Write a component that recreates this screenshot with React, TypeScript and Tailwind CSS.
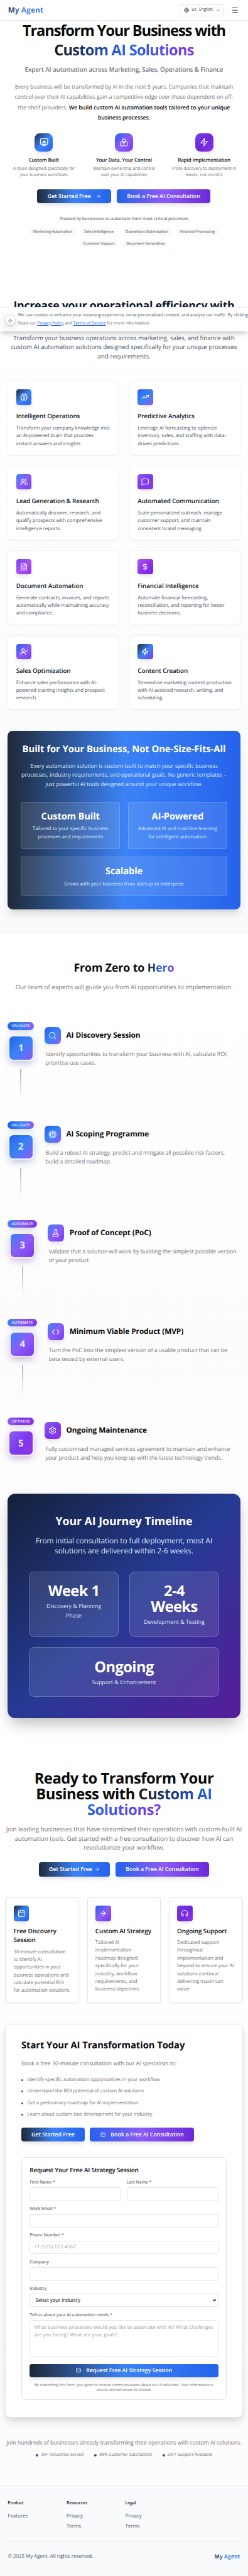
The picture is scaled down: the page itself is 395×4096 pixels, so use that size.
import { Fragment, type ReactNode } from "react";
import {
  ArrowRight, Brain, Calendar, ChevronDown, Code, DollarSign, FileText, FlaskConical, Globe, Headphones,
  Mail, Menu, MessageSquare, Search, Settings, Target, TrendingUp, UserCheck, Users, Zap,
} from "lucide-react";

function Lines({ of }: { of: string[] }) {
  return (
    <>
      {of.map((line, i) => (
        <Fragment key={i}>
          {i > 0 && <br />}
          {line}
        </Fragment>
      ))}
    </>
  );
}

const darkBlue = "bg-linear-to-r/srgb from-[#1f2937] via-[#3b82f6] to-[#2563eb]";
const bluePurple = "bg-linear-to-r/srgb from-[#2563eb] via-[#8b5cf6] to-[#6d28d9]";
const headline = "bg-linear-to-r/srgb from-[#171717] via-[#2563eb] to-[#7c3aed] bg-clip-text text-transparent";
const softShadow = "shadow-[0_10px_15px_-3px_rgb(0_0_0/0.1),0_4px_6px_-4px_rgb(0_0_0/0.1)]";

function MonitorIcon() {
  return (
    <svg viewBox="0 0 24 24" className="size-7" fill="none" stroke="white" strokeWidth="1.8" strokeLinejoin="round" strokeLinecap="round">
      <rect x="2.5" y="2.5" width="19" height="15" rx="2" />
      <path d="M2.5 13.7h19M9.8 17.5v3.3M14.2 17.5v3.3M8 21.3h8" />
      <path d="M8.2 11.5a3.8 3.8 0 1 1 7.6 0v1.6H8.2z" fill="white" stroke="none" />
    </svg>
  );
}

function LockIcon() {
  return (
    <svg viewBox="0 0 24 24" className="size-7" fill="none" stroke="white" strokeWidth="1.8" strokeLinejoin="round" strokeLinecap="round">
      <rect x="3" y="10.8" width="18" height="10.8" rx="2" />
      <path d="M7.6 10.8V7.2a4.4 4.4 0 0 1 8.8 0v3.6M12 14v3.2" />
      <path d="M9.3 11.5h5.4L12 15z" fill="white" />
    </svg>
  );
}

function BoltIcon() {
  return (
    <svg viewBox="0 0 24 24" className="size-7" fill="none" stroke="white" strokeWidth="1.8" strokeLinejoin="round" strokeLinecap="round">
      <path d="M13 2 3 14h9l-1 8 10-12h-9z" />
      <path d="M10 9h4v6h-4z" fill="white" fillOpacity="0.5" stroke="none" />
    </svg>
  );
}

function Header() {
  return (
    <header className="flex h-[65px] items-center justify-between border-b border-[#ebebee] bg-white pr-7 pl-[25px] shadow-[0_1px_2px_rgb(0_0_0/0.06)]">
      <div className={`${darkBlue} bg-clip-text text-[23px] leading-8 font-bold tracking-[0.008em] text-transparent`}>My Agent</div>
      <div className="flex items-center gap-[21px]">
        <div className="flex h-[37px] w-[139px] items-center rounded-md border border-[#e5e5e5] pl-3 text-[13.4px] text-[#374151]">
          <Globe className="size-4" />
          <span className="ml-2">us</span>
          <span className="ml-2 tracking-[-0.017em]">English</span>
          <ChevronDown className="ml-2 size-4" />
        </div>
        <Menu className="size-6 text-[#374151]" />
      </div>
    </header>
  );
}

function HeroFeature({ tile, icon, title, lines }: { tile: string; icon: ReactNode; title: string; lines: string[] }) {
  return (
    <div className="flex w-60 flex-col items-center">
      <div className={`flex size-14 items-center justify-center rounded-2xl ${softShadow} ${tile}`}>{icon}</div>
      <h3 className="mt-4 text-[15.4px] leading-6 font-semibold tracking-[-0.01em] text-[#0a0a0a]">{title}</h3>
      <p className="mt-1 text-[13.4px] leading-5 tracking-[-0.014em] text-[#737373]"><Lines of={lines} /></p>
    </div>
  );
}

function Hero() {
  const pills = [
    ["Marketing Automation", "Sales Intelligence", "Operations Optimization", "Financial Processing"],
    ["Customer Support", "Document Generation"],
  ];
  return (
    <section className="flex h-[764px] flex-col items-center bg-white text-center">
      <h1 className="text-[46.1px] leading-[60px] font-bold tracking-[-0.049em] text-[#0a0a0a]">
        Transform Your Business with<br />
        <span className={`${headline} inline-block tracking-[-0.033em]`}>Custom AI Solutions</span>
      </h1>
      <p className="mt-[15px] text-[19.2px] leading-7 font-semibold tracking-[-0.012em] text-[#737373]">
        Expert AI automation across Marketing, Sales, Operations &amp; Finance
      </p>
      <p className="mt-6 text-[17.3px] leading-8 tracking-[-0.009em] text-[#737373]">
        Every business will be transformed by AI in the next 5 years. Companies that maintain<br />
        control over their AI capabilities gain a competitive edge over those dependent on off-<br />
        the-shelf providers. <span className="font-semibold tracking-[-0.007em] text-[#0a0a0a]">We build custom AI automation tools tailored to your unique<br />
        business processes.</span>
      </p>
      <div className="mt-8 flex gap-2">
        <HeroFeature tile="bg-linear-to-br/srgb from-[#1f2937] via-[#3b82f6] to-[#2563eb]" icon={<MonitorIcon />} title="Custom Built" lines={["AI tools designed specifically for", "your business workflows"]} />
        <HeroFeature tile="bg-linear-to-br/srgb from-[#2563eb] via-[#8b5cf6] to-[#7c3aed]" icon={<LockIcon />} title="Your Data, Your Control" lines={["Maintain ownership and control", "over your AI capabilities"]} />
        <HeroFeature tile="bg-linear-to-br/srgb from-[#7c3aed] via-[#6d28d9] to-[#9333ea]" icon={<BoltIcon />} title="Rapid Implementation" lines={["From discovery to deployment in", "weeks, not months"]} />
      </div>
      <div className="mt-8 flex gap-4">
        <CtaButton tone={darkBlue} className="h-11 w-[229px] gap-4" label="Get Started Free" after={<ArrowRight className="size-4" />} />
        <CtaButton tone={bluePurple} className="h-11 w-[291px]" label="Book a Free AI Consultation" />
      </div>
      <p className="mt-10 text-[13.4px] leading-5 font-semibold tracking-[-0.014em] text-[#737373]">
        Trusted by businesses to automate their most critical processes
      </p>
      <div className="mt-4 flex flex-col items-center gap-3">
        {pills.map((row, i) => (
          <div key={i} className="flex gap-3">
            {row.map((pill) => (
              <span key={pill} className="rounded-full bg-[#fafafa] px-3 text-[11.5px] leading-6 font-semibold tracking-[-0.017em] text-[#737373]">{pill}</span>
            ))}
          </div>
        ))}
      </div>
    </section>
  );
}

function CtaButton({ tone, className, label, before, after }: { tone: string; className: string; label: string; before?: ReactNode; after?: ReactNode }) {
  return (
    <button className={`flex items-center justify-center rounded-lg text-[17.3px] leading-7 font-semibold tracking-[-0.009em] text-white ${softShadow} ${tone} ${className}`}>
      {before}
      <span>{label}</span>
      {after}
    </button>
  );
}

const features = [
  { icon: Brain, tile: "bg-linear-to-br/srgb from-[#1f2937] via-[#3b82f6] to-[#2563eb]", title: "Intelligent Operations", lines: ["Transform your company knowledge into", "an AI-powered brain that provides", "instant answers and insights."] },
  { icon: TrendingUp, tile: "bg-linear-to-br/srgb from-[#2563eb] via-[#3b82f6] to-[#8b5cf6]", title: "Predictive Analytics", lines: ["Leverage AI forecasting to optimize", "inventory, sales, and staffing with data-", "driven predictions."] },
  { icon: Users, tile: "bg-linear-to-br/srgb from-[#3b82f6] via-[#8b5cf6] to-[#7c3aed]", title: "Lead Generation & Research", lines: ["Automatically discover, research, and", "qualify prospects with comprehensive", "intelligence reports."] },
  { icon: MessageSquare, tile: "bg-linear-to-br/srgb from-[#8b5cf6] via-[#7c3aed] to-[#9333ea]", title: "Automated Communication", lines: ["Scale personalized outreach, manage", "customer support, and maintain", "consistent brand messaging."] },
  { icon: FileText, tile: "bg-linear-to-br/srgb from-[#7c3aed] via-[#a855f7] to-[#9333ea]", title: "Document Automation", lines: ["Generate contracts, invoices, and reports", "automatically while maintaining accuracy", "and compliance."] },
  { icon: DollarSign, tile: "bg-linear-to-br/srgb from-[#a855f7] via-[#9333ea] to-[#6d28d9]", title: "Financial Intelligence", lines: ["Automate financial forecasting,", "reconciliation, and reporting for better", "business decisions."] },
  { icon: UserCheck, tile: "bg-linear-to-br/srgb from-[#2563eb] via-[#8b5cf6] to-[#7c3aed]", title: "Sales Optimization", lines: ["Enhance sales performance with AI-", "powered training insights and prospect", "research."] },
  { icon: Zap, tile: "bg-linear-to-br/srgb from-[#1f2937] via-[#3b82f6] to-[#7c3aed]", title: "Content Creation", lines: ["Streamline marketing content production", "with AI-assisted research, writing, and", "scheduling."] },
];

function BuiltCard({ title, lines, className }: { title: string; lines: string[]; className: string }) {
  return (
    <div className={`rounded-lg border border-white/20 bg-white/10 pt-[25px] ${className}`}>
      <div className="text-[28.8px] leading-9 font-bold tracking-[-0.014em]">{title}</div>
      <p className="mt-2.5 text-[15.4px] leading-6 tracking-[-0.005em] text-[#dbeafe]"><Lines of={lines} /></p>
    </div>
  );
}

function FeatureSection() {
  return (
    <section className="relative h-[2058px] bg-linear-to-b/srgb from-white to-[#f9fafb] px-6 pt-24 text-center">
      <h2 className="h-20 text-[34.6px] leading-10 font-bold tracking-[-0.017em] text-[#0f172a]">Increase your operational efficiency with</h2>
      <p className="mt-6 text-[19.2px] leading-7 tracking-[-0.007em] text-[#4b5563]">
        <Lines of={["Transform your business operations across marketing, sales, and finance with", "custom AI automation solutions designed specifically for your unique processes", "and requirements."]} />
      </p>
      <div className="mt-[63px] grid grid-cols-2 gap-x-[33px] gap-y-8 text-left">
        {features.map(({ icon: Icon, tile, title, lines }) => (
          <article key={title} className="h-[230px] rounded-xl border border-[#f3f4f6] bg-white p-6 shadow-[0_1px_2px_rgb(0_0_0/0.05)]">
            <div className={`flex size-12 items-center justify-center rounded-lg text-white ${softShadow} ${tile}`}><Icon className="size-6" /></div>
            <h3 className="mt-[21px] text-[19.2px] leading-7 font-semibold tracking-[-0.013em] text-[#111827]">{title}</h3>
            <p className="mt-3 text-[15.4px] leading-6 tracking-[-0.01em] text-[#4b5563]"><Lines of={lines} /></p>
          </article>
        ))}
      </div>
      <div className={`mt-16 h-[552px] rounded-2xl px-10 pt-10 text-white shadow-[0_20px_25px_-5px_rgb(0_0_0/0.1),0_8px_10px_-6px_rgb(0_0_0/0.1)] ${darkBlue}`}>
        <h3 className="text-[28.8px] leading-9 font-bold tracking-[-0.004em]">Built for Your Business, Not One-Size-Fits-All</h3>
        <p className="mt-5 text-[17.3px] leading-7 tracking-[-0.009em] text-[#dbeafe]">
          <Lines of={["Every automation solution is custom-built to match your specific business", "processes, industry requirements, and operational goals. No generic templates –", "just powerful AI tools designed around your unique workflow."]} />
        </p>
        <div className="mt-10 grid grid-cols-2 gap-6">
          <BuiltCard className="h-[146px]" title="Custom Built" lines={["Tailored to your specific business", "processes and requirements"]} />
          <BuiltCard className="h-[146px]" title="AI-Powered" lines={["Advanced AI and machine learning", "for intelligent automation"]} />
          <BuiltCard className="col-span-2 h-[121px]" title="Scalable" lines={["Grows with your business from startup to enterprise"]} />
        </div>
      </div>
      <CookieBanner />
    </section>
  );
}

function CookieBanner() {
  return (
    <aside className="absolute top-[118px] left-0 flex h-[77px] w-full overflow-visible border-t border-[#e5e7eb] bg-white text-left shadow-[0_10px_15px_-3px_rgb(0_0_0/0.18),0_4px_6px_-4px_rgb(0_0_0/0.15)]">
      <div className="relative flex w-14 shrink-0 items-center bg-radial-[circle_at_32px_45px] from-[#ececec] to-white to-75% pt-2 pl-[17px]">
        <svg viewBox="0 0 12 8" className="absolute top-[29px] left-8 h-2 w-3" fill="none" stroke="#2563eb" strokeWidth="1.6"><path d="M0 1.5c4 0 7 1 9.500 4" /></svg>
        <div className="relative flex size-[29px] items-center justify-center rounded-full bg-white shadow-[0_2px_6px_rgb(0_0_0/0.25)]">
          <Zap className="size-4 text-[#6b6b6b]" strokeWidth={1.8} />
        </div>
      </div>
      <div className="overflow-hidden pt-[15px] text-[13.4px] leading-6 tracking-[-0.009em]">
        <p className="text-[#4b5563]">We use cookies to enhance your browsing experience, serve personalized content, and analyze our traffic. By clicking</p>
        <p className="text-[#6b7280]">
          Read our <a className="text-[#2563eb] underline">Privacy Policy</a> and <a className="text-[#2563eb] underline">Terms of Service</a> for more information.
        </p>
      </div>
    </aside>
  );
}

const validate = {
  badge: "bg-linear-to-r/srgb from-[#2563eb] via-[#3b82f6] to-[#8b5cf6]",
  tile: "bg-linear-to-br/srgb from-[#2563eb] via-[#3b82f6] to-[#8b5cf6]",
  glow: "shadow-[0_0_0_4px_#eff3fe,0_12px_20px_0_rgb(60_50_130/0.22),0_0_30px_6px_rgb(59_130_246/0.14)]",
};
const automate = {
  badge: "bg-linear-to-r/srgb from-[#3b82f6] via-[#8b5cf6] to-[#7c3aed]",
  tile: "bg-linear-to-br/srgb from-[#3b82f6] via-[#8b5cf6] to-[#7c3aed]",
  glow: "shadow-[0_0_0_4px_#f3effd,0_12px_20px_0_rgb(80_40_120/0.22),0_0_30px_6px_rgb(139_92_246/0.14)]",
};
const optimise = {
  badge: "bg-linear-to-r/srgb from-[#8b5cf6] via-[#7c3aed] to-[#9333ea]",
  tile: "bg-linear-to-br/srgb from-[#8b5cf6] via-[#7c3aed] to-[#9333ea]",
  glow: "shadow-[0_0_0_4px_#f3effd,0_12px_20px_0_rgb(80_40_120/0.22),0_0_30px_6px_rgb(139_92_246/0.14)]",
};

const steps = [
  { phase: "VALIDATE", tone: validate, icon: Search, width: "w-[81px]", title: "AI Discovery Session", lines: ["Identify opportunities to transform your business with AI, calculate ROI,", "prioritise use cases."] },
  { phase: "VALIDATE", tone: validate, icon: Target, width: "w-[81px]", title: "AI Scoping Programme", lines: ["Build a robust AI strategy, predict and mitigate all possible risk factors,", "build a detailed roadmap."] },
  { phase: "AUTOMATE", tone: automate, icon: FlaskConical, width: "w-[91px]", title: "Proof of Concept (PoC)", lines: ["Validate that a solution will work by building the simplest possible version", "of your product."] },
  { phase: "AUTOMATE", tone: automate, icon: Code, width: "w-[91px]", title: "Minimum Viable Product (MVP)", lines: ["Turn the PoC into the simplest version of a usable product that can be", "beta tested by external users."] },
  { phase: "OPTIMISE", tone: optimise, icon: Settings, width: "w-[81px]", title: "Ongoing Maintenance", lines: ["Fully customised managed services agreement to maintain and enhance", "your product and help you keep up with the latest technology trends."] },
];

function TimelineCard({ title, lines, className }: { title: string[]; lines: string[]; className: string }) {
  return (
    <div className={`rounded-2xl border border-white/20 bg-white/10 pt-[34px] ${className}`}>
      <div className="text-[46.1px] leading-[48px] font-bold tracking-[-0.026em]"><Lines of={title} /></div>
      <p className="mt-2.5 text-[17.3px] leading-7 text-[#dbeafe]"><Lines of={lines} /></p>
    </div>
  );
}

function ProcessSection() {
  return (
    <section className="h-[2485px] bg-linear-to-b/srgb from-white via-[#fcfcfc] to-white px-6 pt-[82px]">
      <h2 className="text-center text-[34.6px] leading-10 font-bold tracking-[-0.007em] text-[#0a0a0a]">
        From Zero to <span className={headline}>Hero</span>
      </h2>
      <p className="mt-6 text-center text-[19.2px] leading-7 tracking-[-0.006em] text-[#737373]">
        Our team of experts will guide you from AI opportunities to implementation.
      </p>
      <div className="mt-[96px] h-[1455px]">
        {steps.map(({ phase, tone, icon: Icon, width, title, lines }, i) => (
          <div key={title} className="flex h-[305px] items-start gap-9">
            <div className={`flex shrink-0 flex-col items-center ${width}`}>
              <div className={`h-6 w-full rounded-full text-center text-[11.5px] leading-6 font-semibold tracking-[0.04em] text-white/90 ${softShadow} ${tone.badge}`}>{phase}</div>
              <div className={`mt-5 flex size-[72px] items-center justify-center rounded-xl text-[28.8px] leading-9 font-bold text-white/85 ${tone.tile} ${tone.glow}`}>{i + 1}</div>
              {i < 4 && <div className="mt-7 h-24 w-1 rounded-full bg-linear-to-b/srgb from-[#b3b3b8] via-[#ddd0fa] to-transparent" />}
            </div>
            <div className="pt-[15px]">
              <div className="-ml-1 flex items-center gap-4">
                <div className={`flex size-[52px] items-center justify-center rounded-xl text-white/90 ${softShadow} ${tone.tile}`}><Icon className="size-[26px]" /></div>
                <h3 className="text-[23px] leading-8 font-bold tracking-[-0.007em] text-[#0a0a0a]">{title}</h3>
              </div>
              <p className="mt-[17px] text-[17.3px] leading-7 tracking-[-0.008em] text-[#737373]"><Lines of={lines} /></p>
            </div>
          </div>
        ))}
      </div>
      <div className="h-[694px] rounded-3xl bg-linear-to-br/srgb from-[#13203a] via-[#253a93] to-[#581c9c] px-[65px] pt-[66px] text-center text-white shadow-[0_25px_50px_-12px_rgb(0_0_0/0.28),0_0_24px_rgb(0_0_0/0.04)]">
        <h3 className="text-[34.6px] leading-10 font-bold tracking-[-0.004em]">Your AI Journey Timeline</h3>
        <p className="mt-6 text-[23px] leading-8 tracking-[-0.006em] text-[#dbeafe]">
          <Lines of={["From initial consultation to full deployment, most AI", "solutions are delivered within 2-6 weeks."]} />
        </p>
        <div className="mt-[47px] grid grid-cols-2 gap-8">
          <TimelineCard className="h-[202px]" title={["Week 1"]} lines={["Discovery & Planning", "Phase"]} />
          <TimelineCard className="h-[202px]" title={["2-4", "Weeks"]} lines={["Development & Testing"]} />
          <TimelineCard className="col-span-2 h-[154px]" title={["Ongoing"]} lines={["Support & Enhancement"]} />
        </div>
      </div>
    </section>
  );
}

const offers = [
  { icon: Calendar, tile: "bg-linear-to-br/srgb from-[#1f2937] via-[#3b82f6] to-[#2563eb]", title: ["Free Discovery", "Session"], lines: ["30-minute consultation", "to identify AI", "opportunities in your", "business operations and", "calculate potential ROI", "for automation solutions."] },
  { icon: ArrowRight, tile: "bg-linear-to-br/srgb from-[#2563eb] via-[#8b5cf6] to-[#7c3aed]", title: ["Custom AI Strategy"], lines: ["Tailored AI", "implementation", "roadmap designed", "specifically for your", "industry, workflow", "requirements, and", "business objectives."] },
  { icon: Headphones, tile: "bg-linear-to-br/srgb from-[#7c3aed] via-[#6d28d9] to-[#9333ea]", title: ["Ongoing Support"], lines: ["Dedicated support", "throughout", "implementation and", "beyond to ensure your AI", "solutions continue", "delivering maximum", "value."] },
];

function Field({ label, placeholder = "" }: { label: string; placeholder?: string }) {
  return (
    <label className="block">
      <FieldLabel>{label}</FieldLabel>
      <span className="mt-1 flex h-[42px] items-center rounded-md border border-[#e5e5e5] bg-white px-3 text-[15.4px] leading-6 tracking-[0.008em] text-[#9ca3af]">{placeholder}</span>
    </label>
  );
}

function FieldLabel({ children }: { children: ReactNode }) {
  return <span className="block text-[13.4px] leading-5 font-semibold tracking-[-0.018em] text-[#737373]">{children}</span>;
}

function RequestForm() {
  return (
    <form className="mt-12 h-[750px] rounded-xl border border-[#e5e5e5] bg-white px-6 pt-6">
      <h4 className="text-[19.2px] leading-7 font-semibold tracking-[-0.018em] text-[#0a0a0a]">Request Your Free AI Strategy Session</h4>
      <div className="mt-4 flex flex-col gap-4">
        <div className="grid grid-cols-2 gap-4">
          <Field label="First Name *" />
          <Field label="Last Name *" />
        </div>
        <Field label="Work Email *" />
        <Field label="Phone Number *" placeholder="+1 (555) 123-4567" />
        <Field label="Company" />
        <div>
          <FieldLabel>Industry</FieldLabel>
          <div className="mt-1 flex h-[41px] items-center justify-between rounded-md border border-[#e5e5e5] bg-white pr-0.5 pl-4 text-[15.4px] leading-6 tracking-[-0.011em] text-[#0a0a0a]">
            Select your industry
            <ChevronDown className="size-3.5" strokeWidth={4} />
          </div>
        </div>
        <div>
          <FieldLabel>Tell us about your AI automation needs *</FieldLabel>
          <div className="mt-1 h-[114px] rounded-md border border-[#e5e5e5] bg-white px-3 pt-[9px] text-[15.4px] leading-6 tracking-[-0.004em] text-[#9ca3af]">
            <Lines of={["What business processes would you like to automate with AI? What challenges", "are you facing? What are your goals?"]} />
          </div>
        </div>
      </div>
      <CtaButton tone={darkBlue} className="mt-[22px] h-10 w-full gap-4" label="Request Free AI Strategy Session" before={<Mail className="size-4" />} />
      <p className="mt-[17px] text-center text-[11.5px] leading-4 tracking-[-0.007em] text-[#737373]">
        <Lines of={["By submitting this form, you agree to receive communications about our AI solutions. Your information is", "secure and will never be shared."]} />
      </p>
    </form>
  );
}

function ContactSection() {
  const bullets = [
    "Identify specific automation opportunities in your workflow",
    "Understand the ROI potential of custom AI solutions",
    "Get a preliminary roadmap for AI implementation",
    "Learn about custom tool development for your industry",
  ];
  const stats = ["30+ Industries Served", "98% Customer Satisfaction", "24/7 Support Available"];
  return (
    <section className="h-[2301px] bg-linear-to-b/srgb from-white to-[#fcfcfc] px-4 pt-[96px]">
      <h2 className="text-center text-[46.1px] leading-[48px] font-bold tracking-[-0.019em] text-[#0a0a0a]">
        Ready to Transform Your<br />
        Business with <span className={headline}>Custom AI<br />Solutions?</span>
      </h2>
      <p className="mt-[23px] text-center text-[19.2px] leading-7 tracking-[-0.006em] text-[#737373]">
        <Lines of={["Join leading businesses that have streamlined their operations with custom-built AI", "automation tools. Get started with a free consultation to discover how AI can", "revolutionize your workflow."]} />
      </p>
      <div className="mt-8 flex justify-center gap-4">
        <CtaButton tone={darkBlue} className="h-11 w-[221px] gap-2" label="Get Started Free" after={<ArrowRight className="size-4" />} />
        <CtaButton tone={bluePurple} className="h-11 w-[291px]" label="Book a Free AI Consultation" />
      </div>
      <div className="mt-16 grid grid-cols-3 gap-6">
        {offers.map(({ icon: Icon, tile, title, lines }) => (
          <article key={title[0]} className="h-[326px] rounded-lg border border-[#e5e5e5] bg-white p-6 shadow-[0_1px_2px_rgb(0_0_0/0.05)]">
            <div className={`flex size-12 items-center justify-center rounded-lg text-white ${softShadow} ${tile}`}><Icon className="size-6" /></div>
            <h3 className="mt-4 text-[19.2px] leading-7 font-semibold tracking-[-0.011em] text-[#0a0a0a]"><Lines of={title} /></h3>
            <p className="mt-[11px] text-[15.4px] leading-6 tracking-[-0.013em] text-[#737373]"><Lines of={lines} /></p>
          </article>
        ))}
      </div>
      <div className={`mt-16 h-[1216px] rounded-2xl border border-[#e5e5e5] bg-white px-12 pt-12 shadow-[0_20px_25px_-5px_rgb(0_0_0/0.1),0_4px_20px_rgb(0_0_0/0.06)]`}>
        <h3 className="text-[28.8px] leading-9 font-bold tracking-[-0.005em] text-[#0a0a0a]">Start Your AI Transformation Today</h3>
        <p className="mt-6 text-[17.3px] leading-7 tracking-[-0.006em] text-[#737373]">Book a free 30-minute consultation with our AI specialists to:</p>
        <ul className="mt-6 flex flex-col gap-3 text-[15.4px] leading-6 tracking-[-0.014em] text-[#737373]">
          {bullets.map((b) => (
            <li key={b} className="flex items-center gap-3">
              <span className="size-1.5 rounded-full bg-linear-to-r/srgb from-[#1e3a8a] to-[#4f46e5]" />
              {b}
            </li>
          ))}
        </ul>
        <div className="mt-[27px] flex gap-4">
          <CtaButton tone={darkBlue} className="h-11 w-[196px]" label="Get Started Free" />
          <CtaButton tone={bluePurple} className="h-11 w-[323px] gap-4" label="Book a Free AI Consultation" before={<Calendar className="size-4" />} />
        </div>
        <RequestForm />
      </div>
      <p className="mt-16 text-center text-[17.3px] leading-7 tracking-[-0.008em] text-[#737373]">
        Join hundreds of businesses already transforming their operations with custom AI solutions.
      </p>
      <div className="mt-4 flex justify-center gap-8 text-[13.4px] leading-5 tracking-[-0.008em] text-[#737373]">
        {stats.map((s) => (
          <span key={s} className="flex items-center gap-2">
            <span className="size-2 rounded-full bg-linear-to-r/srgb from-[#171717] via-[#2563eb] to-[#7c3aed]" />
            {s}
          </span>
        ))}
      </div>
    </section>
  );
}

function Footer() {
  const columns = [
    { title: "Product", links: ["Features"] },
    { title: "Resources", links: ["Privacy", "Terms"] },
    { title: "Legal", links: ["Privacy", "Terms"] },
  ];
  return (
    <footer className="h-[282px] border-t border-[#e5e7eb] bg-[#f9fafb] px-6 pt-12 text-[15.4px] leading-6 text-[#4b5563]">
      <div className="grid h-[124px] grid-cols-4 gap-x-2">
        {columns.map(({ title, links }) => (
          <div key={title}>
            <h4 className="text-[13.4px] leading-5 font-semibold tracking-[-0.018em] text-[#111827]">{title}</h4>
            <ul className="mt-4 flex flex-col gap-2">
              {links.map((l) => <li key={l}>{l}</li>)}
            </ul>
          </div>
        ))}
      </div>
      <div className="flex items-center justify-between border-t border-[#e5e7eb] pt-8">
        <span>© 2025 My Agent. All rights reserved.</span>
        <span className={`${darkBlue} bg-clip-text text-[17.3px] leading-7 font-bold tracking-[-0.01em] text-transparent`}>My Agent</span>
      </div>
    </footer>
  );
}

export default function App() {
  return (
    <div className="h-[4096px] w-full overflow-hidden bg-white">
      <div className="w-[767px] overflow-hidden font-['Open_Sans',sans-serif] whitespace-nowrap [text-rendering:geometricPrecision] [zoom:0.5149]">
        <Header />
        <Hero />
        <FeatureSection />
        <ProcessSection />
        <ContactSection />
        <Footer />
      </div>
    </div>
  );
}
